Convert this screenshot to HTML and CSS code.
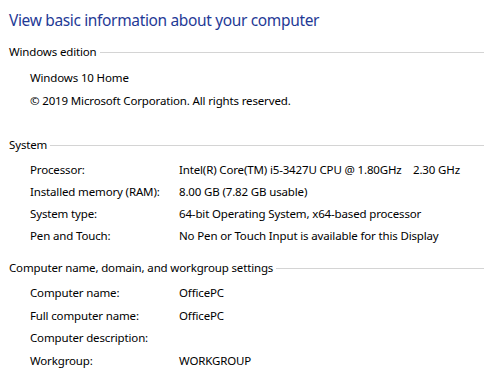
FILE: index.html
```html
<!DOCTYPE html>
<html>
<head>
<meta charset="utf-8">
<link rel="stylesheet" href="styles.css">
</head>
<body>
<div class="page">
  <h1 class="title">View basic information about your computer</h1>

  <section class="group group-edition">
    <div class="group-head"><span class="group-name">Windows edition</span><span class="rule"></span></div>
    <div class="rows rows-edition">
      <div class="line">Windows 10 Home</div>
      <div class="line">© 2019 Microsoft Corporation. All rights reserved.</div>
    </div>
  </section>

  <section class="group group-system">
    <div class="group-head"><span class="group-name">System</span><span class="rule"></span></div>
    <div class="rows rows-system">
      <div class="label">Processor:</div><div class="value">Intel(R) Core(TM) i5-3427U CPU @ 1.80GHz&nbsp;&nbsp;&nbsp; 2.30 GHz</div>
      <div class="label">Installed memory (RAM):</div><div class="value">8.00 GB (7.82 GB usable)</div>
      <div class="label">System type:</div><div class="value">64-bit Operating System, x64-based processor</div>
      <div class="label">Pen and Touch:</div><div class="value">No Pen or Touch Input is available for this Display</div>
    </div>
  </section>

  <section class="group group-computer">
    <div class="group-head"><span class="group-name">Computer name, domain, and workgroup settings</span><span class="rule"></span></div>
    <div class="rows rows-computer">
      <div class="label">Computer name:</div><div class="value">OfficePC</div>
      <div class="label">Full computer name:</div><div class="value">OfficePC</div>
      <div class="label">Computer description:</div><div class="value"></div>
      <div class="label">Workgroup:</div><div class="value">WORKGROUP</div>
    </div>
  </section>
</div>
</body>
</html>
```

FILE: styles.css
```css
html, body {
  margin: 0;
  padding: 0;
  background: #ffffff;
}

body {
  font-family: "Noto Sans", "Open Sans", sans-serif;
  font-size: 11.5px;
  letter-spacing: -0.15px;
  color: #000000;
  overflow: hidden;
}

.page {
  padding: 8px 0 0 9px;
}

.title {
  margin: 0;
  font-size: 15.5px;
  letter-spacing: -0.35px;
  font-weight: normal;
  line-height: 24px;
  color: #1f3a96;
}

.group {
  display: flex;
  flex-direction: column;
}

.group-edition {
  margin-top: 12px;
  padding-bottom: 25px;
}

.group-system {
  padding-bottom: 13px;
}

.group-head {
  display: flex;
  align-items: center;
  height: 16px;
  line-height: 16px;
}

.group-name {
  white-space: nowrap;
}

.rule {
  flex: 1;
  height: 1px;
  margin-left: 3px;
  background: #d4d4d4;
}

.rows {
  margin-top: 6px;
  padding-left: 21px;
}

.rows-edition .line {
  line-height: 23px;
  height: 23px;
}

.rows-system,
.rows-computer {
  display: grid;
  grid-template-columns: 149px 1fr;
}

.rows-system .label,
.rows-system .value {
  line-height: 22px;
  height: 22px;
  white-space: nowrap;
}

.rows-computer .label,
.rows-computer .value {
  line-height: 22.7px;
  height: 22.7px;
  white-space: nowrap;
}
```
